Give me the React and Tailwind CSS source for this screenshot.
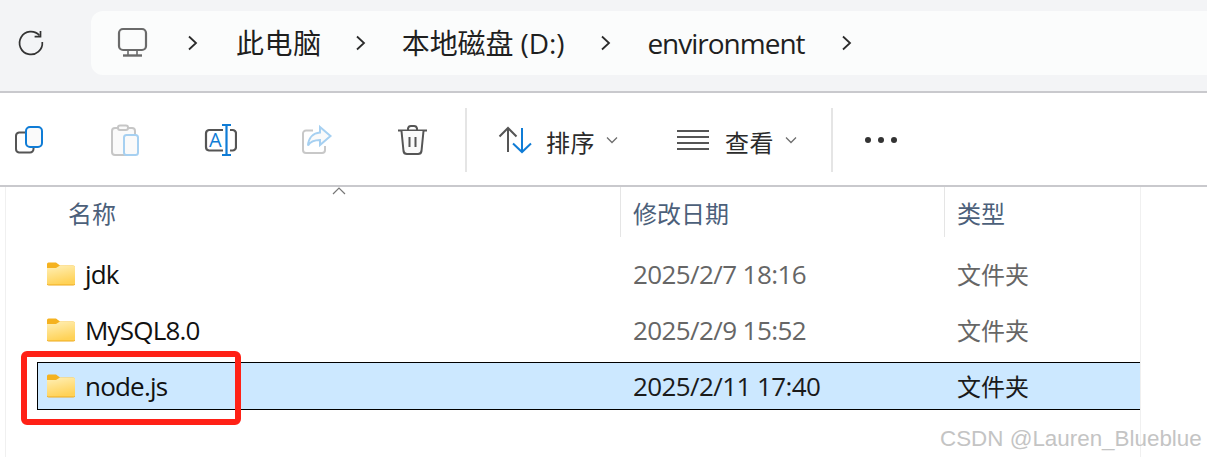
const FONT = "font-['Open_Sans','Noto_Sans_CJK_SC',sans-serif]"

function Chevron({ className }) {
  return (
    <svg width="12" height="16" viewBox="0 0 12 16" fill="none" stroke="#2b2b2b" strokeWidth="1.8" className={className}>
      <path d="M2 1.5 L9 8 L2 14.5" />
    </svg>
  )
}

function Caret({ className }) {
  return (
    <svg width="12" height="8" viewBox="0 0 12 8" fill="none" stroke="#6e6e6e" strokeWidth="1.3" className={className}>
      <path d="M1 1.5 L6 6.5 L11 1.5" />
    </svg>
  )
}

function RefreshIcon() {
  return (
    <svg width="28" height="28" viewBox="0 0 28 28" fill="none" stroke="#333" strokeWidth="1.7">
      <path d="M22.5 6.5 A11.4 11.4 0 1 0 25.3 13" />
      <path d="M23.5 2 V7.6 H17.6" />
    </svg>
  )
}

function MonitorIcon() {
  return (
    <svg width="32" height="32" viewBox="0 0 32 32" fill="none" stroke="#6a6a6a" strokeWidth="2.2">
      <rect x="2" y="2" width="27" height="21" rx="4" fill="#fbfcfc" />
      <path d="M11 23 V28 M20 23 V28" strokeWidth="1.6" />
      <path d="M6 28.5 H25" strokeWidth="2.4" />
    </svg>
  )
}

function CopyIcon() {
  return (
    <svg width="32" height="32" viewBox="0 0 32 32" fill="none" strokeWidth="2">
      <path d="M12 8.5 H6 A3.5 3.5 0 0 0 3 12 V25 A3.5 3.5 0 0 0 6 28.5 H17 A3.5 3.5 0 0 0 20.5 25 V23" stroke="#555" />
      <rect x="13" y="3" width="16" height="20" rx="4" stroke="#0f7cd6" fill="#fafafa" />
    </svg>
  )
}

function PasteIcon() {
  return (
    <svg width="32" height="32" viewBox="0 0 32 32" fill="none" strokeWidth="2">
      <rect x="2" y="4" width="23" height="27" rx="3" stroke="#c6c6c6" fill="#fafafa" />
      <rect x="8" y="1.5" width="10" height="4.5" rx="2" stroke="#c6c6c6" fill="#fafafa" />
      <rect x="14" y="11" width="14" height="20" rx="2.5" stroke="#a6d0f1" fill="#fafafa" />
    </svg>
  )
}

function RenameIcon() {
  return (
    <svg width="34" height="34" viewBox="0 0 34 34" fill="none" strokeWidth="2.2">
      <path d="M20 7 H6 A3.5 3.5 0 0 0 3 10.5 V24 A3.5 3.5 0 0 0 6 27.5 H20" stroke="#555" />
      <path d="M27 7 H29.5 A3.5 3.5 0 0 1 33 10.5 V24 A3.5 3.5 0 0 1 29.5 27.5 H27" stroke="#555" />
      <path d="M23.5 2 V32 M19 2 H28 M19 32 H28" stroke="#0f7cd6" />
      <text x="6" y="24" fontSize="20" fontWeight="500" fill="#0f7cd6" fontFamily="Open Sans, sans-serif">A</text>
    </svg>
  )
}

function ShareIcon() {
  return (
    <svg width="32" height="32" viewBox="0 0 32 32" fill="none" strokeWidth="2">
      <path d="M12 6.5 H5 A3 3 0 0 0 2 9.5 V26 A3 3 0 0 0 5 29 H21 A3 3 0 0 0 24 26 V22" stroke="#c8c8c8" />
      <path d="M19 3 L29.5 12 L19 21 V16 C13 16 9 18 7 21.5 C7.5 14 12 9 19 8.5 Z" stroke="#a6d0f1" fill="#fafafa" />
    </svg>
  )
}

function TrashIcon() {
  return (
    <svg width="32" height="32" viewBox="0 0 32 32" fill="none" stroke="#555" strokeWidth="2">
      <path d="M1 6.5 H30" />
      <path d="M11 6 V4.5 A3 3 0 0 1 14 2 H17 A3 3 0 0 1 20 4.5 V6" />
      <path d="M4.5 7 L6.5 27 A3.5 3.5 0 0 0 10 30 H21 A3.5 3.5 0 0 0 24.5 27 L26.5 7" fill="#fafafa" />
      <path d="M12.5 13 V23 M18.5 13 V23" />
    </svg>
  )
}

function SortIcon() {
  return (
    <svg width="34" height="28" viewBox="0 0 34 28" fill="none" strokeWidth="2">
      <path d="M10 26 V2 M1.5 10.5 L10 2 L18.5 10.5" stroke="#555" />
      <path d="M24 2 V26 M15 17.5 L24 26 L33 17.5" stroke="#0f7cd6" />
    </svg>
  )
}

function ViewIcon() {
  return (
    <svg width="32" height="22" viewBox="0 0 32 22" fill="none" stroke="#555" strokeWidth="2">
      <path d="M0 2 H32 M0 8 H32 M0 14 H32 M0 20 H32" />
    </svg>
  )
}

function Folder() {
  return (
    <svg width="28" height="24" viewBox="0 0 28 24" className="shrink-0">
      <defs>
        <linearGradient id="folderFill" x1="0" y1="0" x2="0.3" y2="1">
          <stop offset="0" stopColor="#fff0b8" />
          <stop offset="1" stopColor="#ffd257" />
        </linearGradient>
      </defs>
      <path d="M0 2 A1.5 1.5 0 0 1 1.5 0.5 H9 L13 3.5 H26 A2 2 0 0 1 28 5.5 V8 H0 Z" fill="#f5b21f" />
      <path d="M0 6 L9 6 L13 3.5 H26.5 A1.5 1.5 0 0 1 28 5 V21.5 A1.5 1.5 0 0 1 26.5 23 H1.5 A1.5 1.5 0 0 1 0 21.5 Z" fill="url(#folderFill)" />
      <path d="M0 21.8 A1.5 1.5 0 0 0 1.5 23 H26.5 A1.5 1.5 0 0 0 28 21.8" fill="none" stroke="#eeaa1c" strokeWidth="1" />
    </svg>
  )
}

const rows = [
  { name: 'jdk', date: '2025/2/7 18:16' },
  { name: 'MySQL8.0', date: '2025/2/9 15:52' },
  { name: 'node.js', date: '2025/2/11 17:40', selected: true },
]

function Row({ row }) {
  return (
    <div
      className={`h-12 flex items-center border-y ${
        row.selected ? 'bg-[#cce8ff] border-black border-l' : 'border-transparent border-l border-l-transparent'
      }`}
    >
      <div className="w-[595px] flex items-center pl-[9px] gap-[10px]">
        <Folder />
        <span className="text-[26px] tracking-[-0.8px] text-[#111]">{row.name}</span>
      </div>
      <span className={`w-[324px] text-[26px] tracking-[-0.6px] ${row.selected ? 'text-[#1a1a1a]' : 'text-[#666]'}`}>{row.date}</span>
      <span className={`mt-[2px] text-[24px] ${row.selected ? 'text-[#1a1a1a]' : 'text-[#666]'}`}>文件夹</span>
    </div>
  )
}

export default function App() {
  return (
    <div className={`relative w-[1207px] h-[457px] overflow-hidden bg-white ${FONT}`}>
      {/* Address bar */}
      <div className="h-[93px] bg-[#f3f4f6] border-b-2 border-[#c9c9cd] flex items-start pt-[11px]">
        <div className="w-[91px] h-16 flex items-center pl-[17px]">
          <RefreshIcon />
        </div>
        <div className="flex-1 h-16 bg-[#fbfcfc] rounded-l-xl flex items-center text-[#1f1f1f] text-[28px]">
          <div className="ml-[26px]"><MonitorIcon /></div>
          <Chevron className="ml-[38px]" />
          <span className="ml-[37px] tracking-[0.6px]">此电脑</span>
          <Chevron className="ml-[33px]" />
          <span className="ml-[35px] tracking-[-0.1px]">本地磁盘 (D:)</span>
          <Chevron className="ml-[36px]" />
          <span className="ml-[35px] tracking-[-1px]">environment</span>
          <Chevron className="ml-[36px]" />
        </div>
      </div>

      {/* Command bar */}
      <div className="h-[94px] border-b-2 border-[#c9c9cd] pt-[2px] flex items-center text-[#2b2b2b] text-[24px]">
        <div className="ml-[13px]"><CopyIcon /></div>
        <div className="ml-[65px]"><PasteIcon /></div>
        <div className="ml-[61px]"><RenameIcon /></div>
        <div className="ml-[64px]"><ShareIcon /></div>
        <div className="ml-[64px]"><TrashIcon /></div>
        <div className="ml-[36px] w-[2px] h-16 bg-[#e5e5e5]" />
        <div className="ml-[31px]"><SortIcon /></div>
        <span className="ml-[14px] mt-[6px] tracking-[0.5px]">排序</span>
        <Caret className="ml-[11px]" />
        <div className="ml-[59px]"><ViewIcon /></div>
        <span className="ml-[16px] mt-[6px] tracking-[0.5px]">查看</span>
        <Caret className="ml-[11px]" />
        <div className="ml-[34px] w-[2px] h-16 bg-[#e5e5e5]" />
        <div className="ml-[32px] flex gap-[7px]">
          <span className="size-[6px] rounded-full bg-[#333]" />
          <span className="size-[6px] rounded-full bg-[#333]" />
          <span className="size-[6px] rounded-full bg-[#333]" />
        </div>
      </div>

      {/* File list */}
      <div className="ml-[5px] w-[1136px] h-[270px] border-x border-[#f0f0f0]">
        <div className="h-[50px] flex text-[24px] text-[#4c607a] leading-[54px]">
          <div className="w-[614px] pl-[62px] relative">
            名称
            <svg width="14" height="8" viewBox="0 0 14 8" fill="none" stroke="#777" strokeWidth="1.2" className="absolute left-[326px] top-0">
              <path d="M1 7 L7 1 L13 7" />
            </svg>
          </div>
          <div className="w-[324px] pl-[12px] border-l border-[#e5e5e5]">修改日期</div>
          <div className="pl-[12px] border-l border-[#e5e5e5]">类型</div>
        </div>
        <div className="ml-[31px] w-[1103px] mt-[13px] flex flex-col gap-2">
          {rows.map((row) => (
            <Row key={row.name} row={row} />
          ))}
        </div>
      </div>

      {/* Annotation over the selected row */}
      <div className="absolute left-[21px] top-[351px] w-[220px] h-[74px] border-[6px] border-[#ff2116] rounded-md" />

      {/* Watermark */}
      <span className="absolute left-[940px] top-[424px] text-[22.4px] leading-[30px] text-[#c4c4c4] font-['Liberation_Sans',sans-serif] whitespace-nowrap">
        CSDN @Lauren_Blueblue
      </span>
    </div>
  )
}
